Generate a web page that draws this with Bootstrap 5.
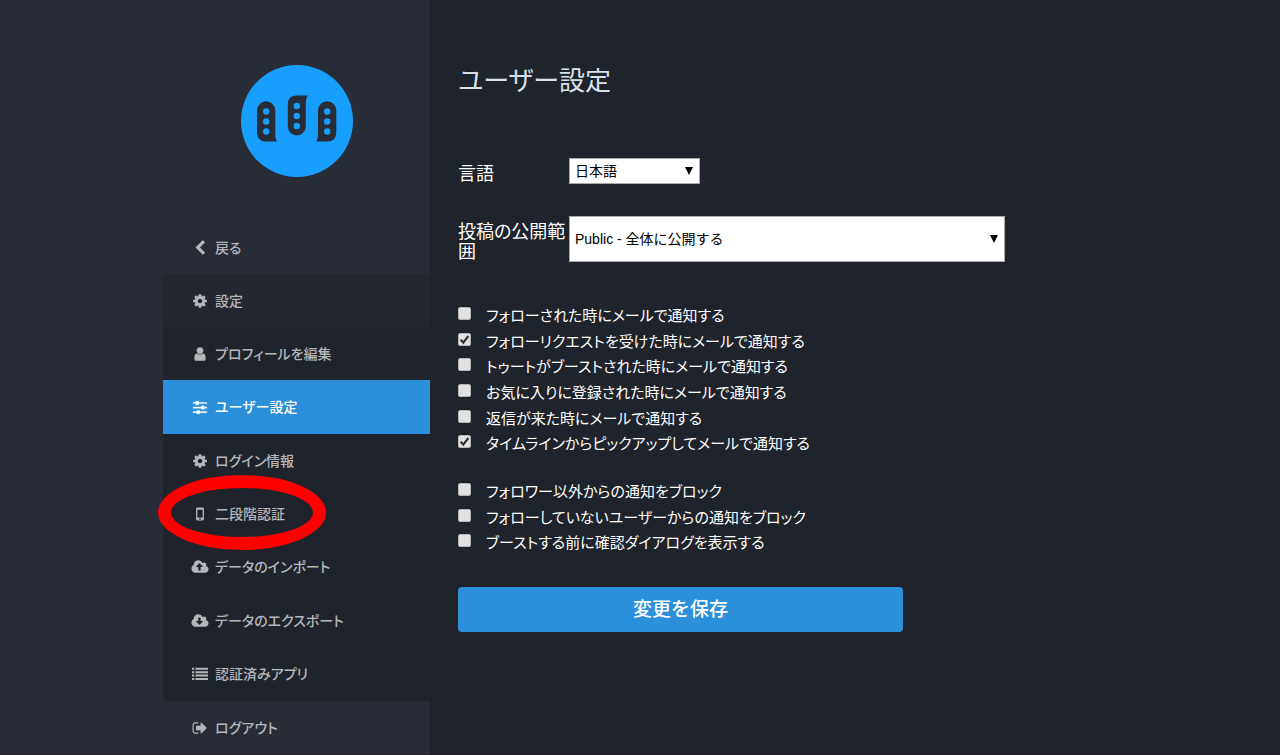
<!DOCTYPE html>
<html lang="ja">
<head>
<meta charset="utf-8">
<meta name="viewport" content="width=device-width, initial-scale=1">
<title>ユーザー設定</title>
<link href="https://cdn.jsdelivr.net/npm/bootstrap@5.3.0/dist/css/bootstrap.min.css" rel="stylesheet">
<style>
body{background:#1f232b;color:#fff;font-family:"Liberation Sans","Noto Sans CJK JP",sans-serif;font-feature-settings:"palt";font-size:15px;line-height:20px}
.side-pane{flex:43 1 0;min-width:267px;background:#282c37}
.main-pane{flex:85 1 0;min-width:0}
.main-inner{padding:65px 28px 40px}
.side-menu{width:267px}
.brand{padding:65px 0 44px}
.side-link{min-height:53px;padding:0 29px;gap:7px;color:#b4b6ba;text-decoration:none;font-size:14px;font-weight:500}
.side-link svg{width:16px;height:16px;fill:currentColor;overflow:visible}
.side-link:hover{color:#fff}
.side-link.current{background:#2b90d9;color:#fff}
.group-head{background:#242630;border-radius:4px 0 0 0}
.group-items{min-height:374px;background:#1f232b;border-radius:0 0 0 4px}
.highlight-ring{left:-5px;top:-12px;width:168px;height:75px;border:13px solid #f00;border-radius:50%;pointer-events:none}
.page-title{font-size:26px;line-height:32px;font-weight:400;color:#d9e1e8;margin:0 0 61px}
.settings{max-width:547px}
.field-label{width:111px;font-size:18px;line-height:20px;flex-shrink:0}
.picker{appearance:none;border:1px solid #a9a9a9;border-radius:0;color:#000;font-size:14px;padding:0 24px 0 5px;background:#fff url("data:image/svg+xml,%3Csvg xmlns='http://www.w3.org/2000/svg' viewBox='0 0 8 8'%3E%3Cpath d='M0 0h8L4 8z'/%3E%3C/svg%3E") no-repeat right 6px center/8px 8px}
.picker-lang{width:131px;height:26px}
.picker-scope{height:46px}
.checks-mail{min-height:154px;margin:41px 0 22px}
.checks-block{min-height:77px;margin-bottom:31px}
.check-row{font-size:15px;line-height:25px;gap:15px}
.tick{appearance:none;width:13px;height:13px;margin:4px 0 0;border:1px solid #b5b5b5;border-radius:2px;background:#e2e2e2 center/11px 11px no-repeat;flex-shrink:0}
.tick:checked{background-image:url("data:image/svg+xml,%3Csvg xmlns='http://www.w3.org/2000/svg' viewBox='0 0 10 10'%3E%3Cpath d='M1.500 5.200l2.400 2.600L8.500 1.800' fill='none' stroke='%23333' stroke-width='2'/%3E%3C/svg%3E")}
.save{max-width:445px;height:45px;background:#2b90d9;color:#fff;border:0;border-radius:4px;font-size:19px;line-height:24px;font-weight:500;padding:0}
.save:hover{background:#3c9ce2;color:#fff}
</style>
</head>
<body>
<svg class="d-none" aria-hidden="true">
<symbol id="cog" viewBox="0 0 1792 1792"><path d="M1152 896q0-106-75-181t-181-75-181 75-75 181 75 181 181 75 181-75 75-181zm512-109v222q0 12-8 23t-20 13l-185 28q-19 54-39 91 35 50 107 138 10 12 10 25t-9 23q-27 37-99 108t-94 71q-12 0-26-9l-138-108q-44 23-91 38-16 136-29 186-7 28-36 28h-222q-14 0-24.500-8.500t-11.500-21.500l-28-184q-49-16-90-37l-141 107q-10 9-25 9-14 0-25-11-126-114-165-168-7-10-7-23 0-12 8-23 15-21 51-66.500t54-70.500q-27-50-41-99l-183-27q-13-2-21-12.500t-8-23.500v-222q0-12 8-23t19-13l186-28q14-46 39-92-40-57-107-138-10-12-10-24 0-10 9-23 26-36 98.500-107.500t94.500-71.500q13 0 26 10l138 107q44-23 91-38 16-136 29-186 7-28 36-28h222q14 0 24.500 8.500t11.500 21.500l28 184q49 16 90 37l142-107q9-9 24-9 13 0 25 10 129 119 165 170 7 8 7 22 0 12-8 23-15 21-51 66.500t-54 70.500q26 50 41 98l183 28q13 2 21 12.500t8 23.500z"/></symbol>
</svg>
<div class="d-flex min-vh-100">
<aside class="side-pane">
<nav class="side-menu ms-auto">
<a href="#" class="brand d-block text-center" aria-label="ホーム">
<svg width="112" height="112" viewBox="14 14.500 112 112" class="d-block mx-auto">
<circle cx="70" cy="70.500" r="56" fill="#189efc"/>
<g fill="#282c37">
<path d="M30 60a9 9 0 0 1 18.300 0v22q0 6.500 1.700 9H39q-9 0-9-9z"/>
<path d="M80.500 45q-1.700 3-1.700 9v22a9 9 0 0 1-18 0V54q0-9 9-9z"/>
<path d="M109.300 60a9 9 0 0 0-18.300 0v22q0 6.500-1.700 9h11q9 0 9-9z"/>
</g>
<g fill="#189efc">
<circle cx="39.200" cy="61" r="3.200"/><circle cx="39.200" cy="71" r="3.200"/><circle cx="39.200" cy="81" r="3.200"/>
<circle cx="69.800" cy="55.500" r="3.200"/><circle cx="69.800" cy="65.500" r="3.200"/><circle cx="69.800" cy="75.500" r="3.200"/>
<circle cx="100.200" cy="61" r="3.200"/><circle cx="100.200" cy="71" r="3.200"/><circle cx="100.200" cy="81" r="3.200"/>
</g>
</svg>
</a>
<ul class="list-unstyled m-0">
<li><a href="#" class="side-link d-flex align-items-center"><svg viewBox="0 0 1792 1792"><path d="M1427 301l-531 531 531 531q19 19 19 45t-19 45l-166 166q-19 19-45 19t-45-19l-742-742q-19-19-19-45t19-45l742-742q19-19 45-19t45 19l166 166q19 19 19 45t-19 45z"/></svg>戻る</a></li>
<li>
<a href="#" class="side-link group-head d-flex align-items-center"><svg><use href="#cog"/></svg>設定</a>
<ul class="group-items list-unstyled d-flex flex-column m-0">
<li class="d-flex flex-fill"><a href="#" class="side-link d-flex align-items-center w-100"><svg viewBox="0 0 1792 1792"><path d="M1536 1399q0 109-62.500 187t-150.500 78h-854q-88 0-150.500-78t-62.500-187q0-85 8.500-160.500t31.500-152 58.500-131 94-89 134.500-34.500q131 128 313 128t313-128q76 0 134.500 34.500t94 89 58.500 131 31.500 152 8.500 160.500zm-256-887q0 159-112.500 271.500t-271.500 112.500-271.500-112.500-112.500-271.500 112.500-271.500 271.500-112.500 271.500 112.500 112.500 271.500z"/></svg>プロフィールを編集</a></li>
<li class="d-flex flex-fill"><a href="#" class="side-link current d-flex align-items-center w-100" aria-current="page"><svg viewBox="128 0 1536 1792"><path stroke="currentColor" stroke-width="40" d="M480 1408v128h-352v-128h352zm352-128q26 0 45 19t19 45v256q0 26-19 45t-45 19h-256q-26 0-45-19t-19-45v-256q0-26 19-45t45-19h256zm160-384v128h-864v-128h864zm-640-512v128h-224v-128h224zm1312 1024v128h-736v-128h736zm-960-1152q26 0 45 19t19 45v256q0 26-19 45t-45 19h-256q-26 0-45-19t-19-45v-256q0-26 19-45t45-19h256zm640 512q26 0 45 19t19 45v256q0 26-19 45t-45 19h-256q-26 0-45-19t-19-45v-256q0-26 19-45t45-19h256zm320 128v128h-224v-128h224zm0-512v128h-864v-128h864z"/></svg>ユーザー設定</a></li>
<li class="d-flex flex-fill"><a href="#" class="side-link d-flex align-items-center w-100"><svg><use href="#cog"/></svg>ログイン情報</a></li>
<li class="d-flex flex-fill position-relative"><a href="#" class="side-link d-flex align-items-center w-100"><svg viewBox="0 0 15 15"><path fill-rule="evenodd" d="M5 1.500h5q1.200 0 1.200 1.200v9.600q0 1.200-1.200 1.200H5q-1.200 0-1.200-1.200V2.700Q3.800 1.500 5 1.500zM5 3.500v7.300h5V3.500zM7.500 11.500a.7.7 0 1 0 .01 0z"/></svg>二段階認証</a><span class="highlight-ring position-absolute"></span></li>
<li class="d-flex flex-fill"><a href="#" class="side-link d-flex align-items-center w-100"><svg viewBox="0 0 1792 1792"><path fill-rule="evenodd" d="M1216 864q0-14-9-23l-352-352q-9-9-23-9t-23 9l-351 351q-10 12-10 24 0 14 9 23t23 9h224v352q0 13 9.500 22.500t22.500 9.500h192q13 0 22.500-9.500t9.500-22.500v-352h224q13 0 22.500-9.500t9.500-22.500zm640 288q0 159-112.500 271.500t-271.500 112.500h-1088q-185 0-316.500-131.500t-131.500-316.500q0-130 70-240t188-165q-2-30-2-43 0-212 150-362t362-150q156 0 285.500 87t188.500 231q71-62 166-62 106 0 181 75t75 181q0 76-41 138 130 31 213.500 135.500t83.500 238.500z"/></svg>データのインポート</a></li>
<li class="d-flex flex-fill"><a href="#" class="side-link d-flex align-items-center w-100"><svg viewBox="0 0 1792 1792"><path fill-rule="evenodd" d="M1216 928q0-14-9-23t-23-9h-224v-352q0-13-9.500-22.500t-22.500-9.500h-192q-13 0-22.500 9.500t-9.500 22.500v352h-224q-13 0-22.500 9.500t-9.500 22.500q0 14 9 23l352 352q9 9 23 9t23-9l351-351q10-12 10-24zm640 224q0 159-112.500 271.500t-271.500 112.500h-1088q-185 0-316.500-131.500t-131.500-316.500q0-130 70-240t188-165q-2-30-2-43 0-212 150-362t362-150q156 0 285.500 87t188.500 231q71-62 166-62 106 0 181 75t75 181q0 76-41 138 130 31 213.500 135.500t83.500 238.500z"/></svg>データのエクスポート</a></li>
<li class="d-flex flex-fill"><a href="#" class="side-link d-flex align-items-center w-100"><svg viewBox="0 0 1792 1792"><path d="M0 192h256v224H0zM0 576h256v224H0zM0 960h256v224H0zM0 1344h256v224H0zM384 192h1408v224H384zM384 576h1408v224H384zM384 960h1408v224H384zM384 1344h1408v224H384z"/></svg>認証済みアプリ</a></li>
</ul>
</li>
<li><a href="#" class="side-link d-flex align-items-center"><svg viewBox="0 0 1792 1792"><path d="M704 1440q0 4 1 20t.500 26.500-3 23.500-10 19.500-20.500 6.500h-320q-119 0-203.500-84.500t-84.500-203.500v-704q0-119 84.500-203.500t203.500-84.500h320q13 0 22.500 9.500t9.500 22.500q0 4 1 20t.500 26.500-3 23.500-10 19.500-20.500 6.500h-320q-66 0-113 47t-47 113v704q0 66 47 113t113 47h312l11.500 1 11.500 3 8 5.500 7 9 2 13.500zm928-544q0 26-19 45l-544 544q-19 19-45 19t-45-19-19-45v-288h-448q-26 0-45-19t-19-45v-384q0-26 19-45t45-19h448v-288q0-26 19-45t45-19 45 19l544 544q19 19 19 45z"/></svg>ログアウト</a></li>
</ul>
</nav>
</aside>
<main class="main-pane">
<div class="main-inner">
<h1 class="page-title">ユーザー設定</h1>
<form class="settings">
<div class="d-flex align-items-end mb-3 pb-3">
<label class="field-label" for="lang">言語</label>
<select id="lang" class="picker picker-lang"><option>日本語</option></select>
</div>
<div class="d-flex align-items-end">
<label class="field-label" for="scope">投稿の公開範囲</label>
<select id="scope" class="picker picker-scope flex-fill"><option>Public - 全体に公開する</option></select>
</div>
<div class="checks-mail d-flex flex-column">
<label class="check-row d-flex flex-fill"><input type="checkbox" class="tick">フォローされた時にメールで通知する</label>
<label class="check-row d-flex flex-fill"><input type="checkbox" class="tick" checked>フォローリクエストを受けた時にメールで通知する</label>
<label class="check-row d-flex flex-fill"><input type="checkbox" class="tick">トゥートがブーストされた時にメールで通知する</label>
<label class="check-row d-flex flex-fill"><input type="checkbox" class="tick">お気に入りに登録された時にメールで通知する</label>
<label class="check-row d-flex flex-fill"><input type="checkbox" class="tick">返信が来た時にメールで通知する</label>
<label class="check-row d-flex flex-fill"><input type="checkbox" class="tick" checked>タイムラインからピックアップしてメールで通知する</label>
</div>
<div class="checks-block d-flex flex-column">
<label class="check-row d-flex flex-fill"><input type="checkbox" class="tick">フォロワー以外からの通知をブロック</label>
<label class="check-row d-flex flex-fill"><input type="checkbox" class="tick">フォローしていないユーザーからの通知をブロック</label>
<label class="check-row d-flex flex-fill"><input type="checkbox" class="tick">ブーストする前に確認ダイアログを表示する</label>
</div>
<button type="submit" class="btn save d-block w-100">変更を保存</button>
</form>
</div>
</main>
</div>
<script src="https://cdn.jsdelivr.net/npm/bootstrap@5.3.0/dist/js/bootstrap.bundle.min.js"></script>
</body>
</html>
